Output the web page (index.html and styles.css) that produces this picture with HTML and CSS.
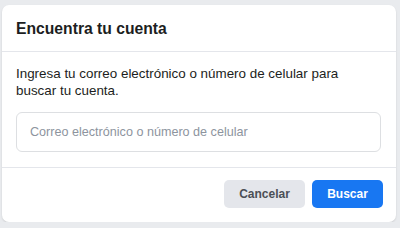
FILE: index.html
```html
<!DOCTYPE html>
<html lang="es">

<head>
    <meta charset="UTF-8">
    <meta name="viewport" content="width=device-width, initial-scale=1.0">
    <title>Encuentra tu cuenta</title>
    <link rel="stylesheet" href="styles.css">
</head>

<body>
    <div class="find_box">
        <h2 class="find_title">Encuentra tu cuenta</h2>
        <form action="" class="find_form">
            <div class="find_body">
                <p>Ingresa tu correo electrónico o número de celular para buscar tu cuenta.</p>
                <input type="text" name="email" id="email" placeholder="Correo electrónico o número de celular">
            </div>
            <div class="find_footer">
                <a href="JavaScript:" class="btn btn_cancel">Cancelar</a>
                <button class="btn btn_search">Buscar</button>
            </div>
        </form>
    </div>
</body>

</html>
```

FILE: styles.css
```css
* {
    margin: 0;
    padding: 0;
    box-sizing: border-box;
}

body {
    background-color: #e9ebee;
    font-family: "Liberation Sans", Arial, sans-serif;
    color: #1c1e21;
    padding: 5px 4px 0 2px;
}

a {
    text-decoration: none;
}

.find_box {
    width: 394px;
    height: 217px;
    background-color: #fff;
    border-radius: 7px;
    box-shadow: 0 1px 2px rgba(0, 0, 0, .12);
}

.find_title {
    height: 47px;
    line-height: 47px;
    padding-left: 14px;
    font-size: 15.7px;
    font-weight: bold;
    border-bottom: 1px solid #e4e6eb;
}

.find_body {
    padding: 13px 14px 15px;
    border-bottom: 1px solid #e4e6eb;
}

.find_body p {
    font-size: 13.4px;
    line-height: 17px;
    margin-bottom: 13px;
}

.find_body input {
    display: block;
    width: 365px;
    height: 40px;
    padding-left: 13px;
    border: 1px solid #dddfe2;
    border-radius: 6px;
    font-family: inherit;
    font-size: 12.6px;
    color: #1c1e21;
    outline: none;
}

.find_body input::placeholder {
    color: #8d949e;
}

.find_footer {
    display: flex;
    justify-content: flex-end;
    gap: 7px;
    padding: 12px 13px 0;
}

.btn {
    display: block;
    height: 28px;
    line-height: 28px;
    border: none;
    border-radius: 5px;
    font-family: inherit;
    font-size: 12px;
    font-weight: bold;
    text-align: center;
}

.btn_cancel {
    width: 81px;
    background-color: #e4e6eb;
    color: #4b4f56;
}

.btn_search {
    width: 71px;
    background-color: #1877f2;
    color: #fff;
}
```
